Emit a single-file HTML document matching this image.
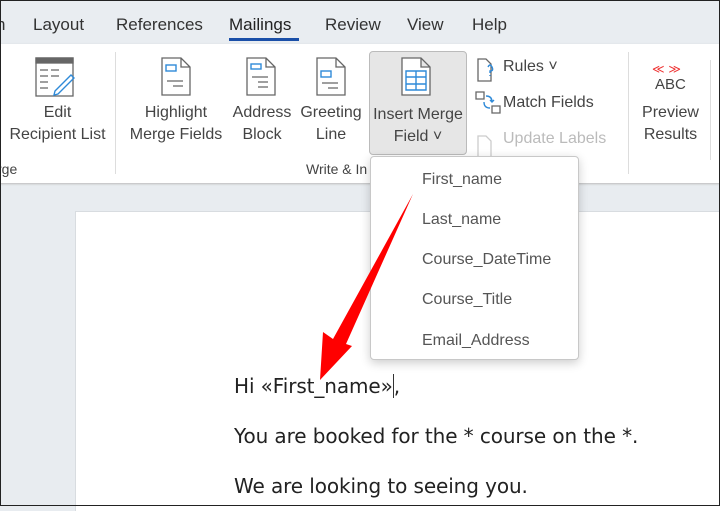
<!DOCTYPE html>
<html><head><meta charset="utf-8"><style>
*{margin:0;padding:0;box-sizing:border-box}
body{width:720px;height:506px;overflow:hidden;position:relative;font-family:"Liberation Sans",sans-serif;background:#e8ecf0;color:#333}
.abs{position:absolute}
.tabs{left:0;top:0;width:720px;height:44px;background:#e9edf1}
.tab{position:absolute;top:15px;font-size:17px;color:#333}
.ribbon{left:0;top:44px;width:720px;height:139px;background:#fff;box-shadow:0 1px 2px #bbb}
.lbl{position:absolute;font-size:16px;color:#444;text-align:center;line-height:22px}
.page{left:75px;top:211px;width:650px;height:300px;background:#fff;border-left:1px solid #d8dce0;border-top:1px solid #d8dce0}
.doc{position:absolute;font-size:20px;color:#222;font-family:"DejaVu Sans","Liberation Sans",sans-serif;letter-spacing:-0.1px}
.menu{left:370px;top:156px;width:209px;height:204px;background:#fff;border:1px solid #c8c8c8;border-radius:4px;box-shadow:0 3px 10px rgba(0,0,0,.2)}
.mi{position:absolute;left:51px;font-size:16px;color:#555}
</style></head><body>
<div class="abs tabs">
<div class="tab" style="left:-4px">n</div>
<div class="tab" style="left:33px">Layout</div>
<div class="tab" style="left:116px">References</div>
<div class="tab" style="left:229px;color:#222">Mailings</div>
<div class="abs" style="left:229px;top:38px;width:70px;height:3px;background:#1a4fa8"></div>
<div class="tab" style="left:325px">Review</div>
<div class="tab" style="left:407px">View</div>
<div class="tab" style="left:472px">Help</div>
</div>
<div class="abs ribbon">
<div class="abs" style="left:115px;top:8px;width:1px;height:122px;background:#ddd"></div>
<div class="abs" style="left:628px;top:8px;width:1px;height:122px;background:#ddd"></div>
<div class="abs" style="left:710px;top:16px;width:1px;height:100px;background:#ddd"></div>
<div class="abs" style="left:369px;top:7px;width:98px;height:104px;background:#e6e6e6;border:1px solid #bbb;border-radius:4px"></div>
<svg class="abs" style="left:0;top:0" width="720" height="139">
<g fill="none" stroke="#666" stroke-width="1.3">
<rect x="36" y="14" width="37" height="38"/><rect x="36" y="14" width="37" height="5" fill="#666"/>
<path d="M40 26h8M51 26h8M40 32h8M51 32h8M40 38h8M40 44h8"/>
<path d="M162 14h19l9 9v28h-28zM181 14v9h9" fill="#fff"/>
<path d="M247 14h19l9 9v28h-28zM266 14v9h9" fill="#fff"/>
<path d="M317 14h19l9 9v28h-28zM336 14v9h9" fill="#fff"/>
<path d="M402 14h19l9 9v28h-28zM421 14v9h9" fill="#fff"/>
<path d="M167 37h16M173 42h10M252 33h16M258 38h10M258 43h10M322 39h16M328 44h10"/>
<path d="M478 15h8l5 5v17h-13z"/>
<path d="M478 92h8l5 5v17h-13z" stroke="#ccc"/>
<path d="M476 48h8v7h-8zM492 62h8v7h-8z"/>
</g>
<g fill="none" stroke="#2f8ad8" stroke-width="1.4">
<path d="M55 47l16-16 3 3-16 16-4 1z"/>
<rect x="166" y="21" width="10" height="6"/><rect x="251" y="20" width="10" height="5"/><rect x="321" y="27" width="10" height="6"/>
<path d="M406 27h20v19h-20zM406 33h20M406 40h20M416 27v19"/>
<path d="M488 23q2-4 4 0t-2 4v2M490 31v1"/>
<path d="M486 52q6 0 6 6m-2-2 2 2 2-2M490 64q-6 0-6-6"/>
</g>
<text x="652" y="29" fill="#e33" font-size="12" font-family="DejaVu Sans">≪ ≫</text>
<text x="655" y="45" fill="#444" font-size="15">ABC</text>
</svg>
<div class="lbl" style="left:0;top:58px;width:115px">Edit<br>Recipient List</div>
<div class="lbl" style="left:126px;top:58px;width:100px">Highlight<br>Merge Fields</div>
<div class="lbl" style="left:229px;top:58px;width:66px">Address<br>Block</div>
<div class="lbl" style="left:298px;top:58px;width:66px">Greeting<br>Line</div>
<div class="lbl" style="left:369px;top:60px;width:98px">Insert Merge<br>Field ˅</div>
<div class="lbl" style="left:503px;top:12px;text-align:left">Rules ˅</div>
<div class="lbl" style="left:503px;top:48px;text-align:left">Match Fields</div>
<div class="lbl" style="left:503px;top:84px;text-align:left;color:#bbb">Update Labels</div>
<div class="lbl" style="left:633px;top:58px;width:75px">Preview<br>Results</div>
<div class="lbl" style="left:-3px;top:114px;font-size:14px">rge</div>
<div class="lbl" style="left:306px;top:114px;font-size:14px">Write &amp; In</div>
</div>
<div class="abs page">
<div class="doc" style="left:158px;top:162px">Hi «First_name»<span style="border-left:1px solid #333"></span>,</div>
<div class="doc" style="left:158px;top:212px">You are booked for the * course on the *.</div>
<div class="doc" style="left:158px;top:262px">We are looking to seeing you.</div>
</div>
<div class="abs menu">
<div class="mi" style="top:14px">First_name</div>
<div class="mi" style="top:54px">Last_name</div>
<div class="mi" style="top:94px">Course_DateTime</div>
<div class="mi" style="top:134px">Course_Title</div>
<div class="mi" style="top:175px">Email_Address</div>
</div>
<svg class="abs" style="left:0;top:0" width="720" height="506"><polygon points="413,194 346,344 352,346 320,380 323,332 333,339" fill="#f00"/></svg>
<div class="abs" style="left:0;top:0;width:720px;height:506px;border:1px solid #222"></div>
</body></html>
